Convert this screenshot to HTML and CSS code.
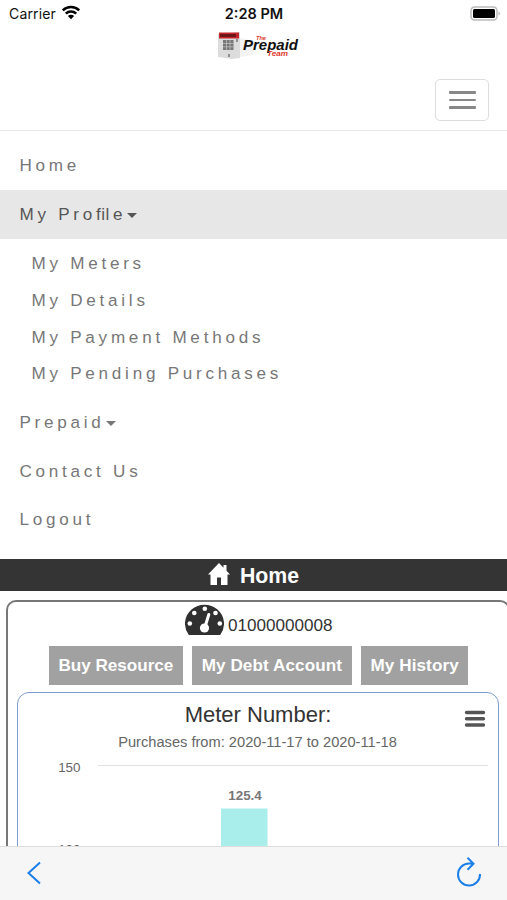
FILE: index.html
```html
<!DOCTYPE html>
<html lang="en">
<head>
  <meta charset="UTF-8" />
  <meta name="viewport" content="width=device-width, initial-scale=1.0"/>
  <title>The Prepaid Team</title>
  <link rel="stylesheet" href="styles.css">
</head>
<body>
  <div class="statusbar">
    <div class="carrier">
      <span>Carrier</span>
      <svg width="20" height="15" viewBox="0 0 20 15">
        <path d="M1.8 5.4a11.6 11.6 0 0 1 16.4 0M4.8 8.6a7.4 7.4 0 0 1 10.4 0" fill="none" stroke="#000" stroke-width="2.5"/>
        <path d="M10 14.2l-3.1-3.1a4.4 4.4 0 0 1 6.2 0z"/>
      </svg>
    </div>
    <div class="time">2:28 PM</div>
    <div class="battery">
      <svg width="32" height="16" viewBox="0 0 32 16">
        <rect x="2" y="1" width="26" height="13" rx="3.5" fill="#fff" stroke="#bbb" stroke-width="1.5"/>
        <rect x="4" y="3" width="22" height="9" rx="1.5"/>
        <path d="M29.5 5.3l2 2.2-2 2.2z" fill="#bbb"/>
      </svg>
    </div>
  </div>

  <header>
    <svg class="logo" width="84" height="32" viewBox="0 0 84 32">
      <path d="M1 3l22-2v26l-8 1-14-2z" fill="#dcdcdc"/>
      <path d="M23 7l15 3-2 14-13 2z" fill="#f3f3f3"/>
      <path d="M2 1.500h20v6h-20z" fill="#c5262b"/>
      <path d="M3 3h16v3h-16z" fill="#6d1719"/>
      <rect x="6" y="9" width="10.500" height="10" fill="#777"/>
      <path d="M9.500 9v10M13 9v10M6 12.500h10.500M6 15.800h10.500" stroke="#c4c4c4" stroke-width=".7"/>
      <path d="M20 8v3M12 23v3" stroke="#666" stroke-width="1.300"/>
      <text x="39" y="9" class="logo-red" font-size="6" textLength="10" lengthAdjust="spacingAndGlyphs">The</text>
      <text x="26" y="18.500" class="logo-black" font-size="14.500" textLength="55" lengthAdjust="spacingAndGlyphs">Prepaid</text>
      <text x="50" y="24.500" class="logo-red" font-size="7.500" textLength="21" lengthAdjust="spacingAndGlyphs">Team</text>
    </svg>
    <button class="toggle" aria-label="Menu"><i></i><i></i><i></i></button>
  </header>

  <nav>
    <a>Home</a>
    <a class="active">My Pro<span class="lig">fi</span>le<b class="caret"></b></a>
    <div class="submenu">
      <a>My Meters</a>
      <a>My Details</a>
      <a>My Payment Methods</a>
      <a>My Pending Purchases</a>
    </div>
    <a>Prepaid<b class="caret"></b></a>
    <a>Contact Us</a>
    <a>Logout</a>
  </nav>

  <div class="page-title">
    <svg width="22" height="22" viewBox="0 0 22 22">
      <path d="M11 0L0 11.500h2.500V22h6.500v-7.500h4V22h6.500V11.500h2.500L18.500 7.800V2H15.500v2.700z" fill="#fff"/>
    </svg>
    <h1>Home</h1>
  </div>

  <main>
    <section class="card">
      <div class="meter">
        <svg width="39" height="31" viewBox="0 0 39 31">
          <path d="M3.500 30.500A19.500 19 0 1 1 35.500 30.500Q35 31 34 31H5Q4 31 3.500 30.500z" fill="#303030"/>
          <g fill="#fff">
            <circle cx="4.800" cy="19.500" r="2.300"/>
            <circle cx="9.300" cy="9" r="2.300"/>
            <circle cx="19.800" cy="4.700" r="2.300"/>
            <circle cx="30.500" cy="9" r="2.300"/>
            <circle cx="34.800" cy="19.500" r="2.300"/>
            <circle cx="19.500" cy="24" r="4.600"/>
          </g>
          <path d="M20 23L23.800 10.500" stroke="#fff" stroke-width="3" stroke-linecap="round"/>
        </svg>
        <span>01000000008</span>
      </div>
      <div class="buttons">
        <button>Buy Resource</button>
        <button>My Debt Account</button>
        <button>My History</button>
      </div>
      <div class="chart">
        <svg width="480" height="240" viewBox="0 0 480 240">
          <text x="240" y="29" class="chart-title">Meter Number:</text>
          <text x="239.500" y="54" class="chart-subtitle">Purchases from: 2020-11-17 to 2020-11-18</text>
          <path d="M448.500 19.500h17M448.500 25.700h17M448.500 32h17" stroke="#555" stroke-width="3.400" stroke-linecap="round"/>
          <path d="M80 72.500h390" stroke="#e2e2e2"/>
          <text x="62.500" y="79" class="axis">150</text>
          <text x="62.500" y="161" class="axis">100</text>
          <rect x="203" y="115.500" width="46.500" height="125" fill="#aaeeec"/>
          <text x="227" y="106.500" class="value">125.4</text>
        </svg>
      </div>
    </section>
  </main>

  <footer>
    <svg width="16" height="24" viewBox="0 0 16 24">
      <path d="M14 1.500L2.500 12 14 22.500" fill="none" stroke="#1a7fe8" stroke-width="2"/>
    </svg>
    <svg width="26" height="32" viewBox="0 0 26 32">
      <path d="M17 6.500H13A11 11 0 1 0 24 17M11.500 .8l6 6-6 6" fill="none" stroke="#1a7fe8" stroke-width="2"/>
    </svg>
  </footer>
</body>
</html>
```
FILE: styles.css
```css
* {
  margin: 0;
  padding: 0;
  box-sizing: border-box;
}

body {
  height: 900px;
  display: flex;
  flex-direction: column;
  overflow: hidden;
  background: #fff;
  color: #333;
  font-family: "Liberation Sans", Arial, sans-serif;
  font-size: 17.1px;
}

svg {
  display: block;
  flex: none;
}

.statusbar {
  flex: none;
  height: 27px;
  padding: 0 6px 0 9px;
  display: grid;
  grid-template-columns: 1fr auto 1fr;
  align-items: center;
  color: #111;
  font-family: Inter, sans-serif;
  font-size: 14px;
}

.carrier {
  display: flex;
  align-items: center;
  gap: 5px;
  letter-spacing: 0.15px;
}

.carrier svg {
  margin-top: -2px;
}

.time {
  font-weight: 600;
  font-size: 14.5px;
  margin-left: -2px;
}

.battery {
  justify-self: end;
}

header {
  flex: none;
  height: 104px;
  border-bottom: 1px solid #e7e7e7;
  display: flex;
  flex-direction: column;
}

.logo {
  margin: 4px 0 0 217px;
}

.logo-red,
.logo-black {
  font-style: italic;
  font-weight: bold;
}

.logo-red {
  fill: #e0392c;
}

.logo-black {
  fill: #111;
}

.toggle {
  align-self: flex-end;
  width: 54px;
  height: 42px;
  margin: 16px 18px 0 0;
  background: #fff;
  border: 1px solid #ddd;
  border-radius: 5px;
  display: flex;
  flex-direction: column;
  align-items: center;
  justify-content: center;
  gap: 5px;
}

.toggle i {
  width: 27px;
  height: 2.4px;
  border-radius: 1px;
  background: #888;
}

nav {
  flex: none;
  height: 428px;
  padding-top: 10px;
  color: #777;
  letter-spacing: 3.75px;
}

nav a {
  display: flex;
  align-items: center;
  height: 48.8px;
  padding: 2px 0 0 19.4px;
  white-space: pre;
}

nav .active {
  background: #e7e7e7;
  color: #555;
}

.lig {
  letter-spacing: 0.4px;
}

.caret {
  border-top: 5px solid;
  border-left: 5px solid transparent;
  border-right: 5px solid transparent;
  margin: 1px 0 0 1px;
}

.submenu {
  padding: 6.5px 0 6px;
}

.submenu a {
  height: 36.6px;
  padding-left: 31.4px;
}

.page-title {
  flex: none;
  height: 32px;
  background: #343434;
  color: #fff;
  display: flex;
  align-items: center;
  justify-content: center;
  gap: 10px;
}

.page-title svg {
  margin-top: -2px;
}

.page-title h1 {
  font-size: 21.3px;
  line-height: 24px;
  padding-top: 2px;
}

main {
  flex: 1;
  min-height: 0;
  overflow: hidden;
  padding: 9px 0 0 6px;
}

.card {
  width: 504px;
  height: 400px;
  padding: 2px 0 0 9px;
  border: 2px solid #777;
  border-radius: 10px;
}

.meter {
  display: flex;
  padding-left: 168px;
  gap: 4px;
}

.meter span {
  padding-top: 12px;
  line-height: 20px;
}

.buttons {
  display: flex;
  gap: 9.5px;
  margin: 10px 0 7px 32px;
}

.buttons button {
  height: 39px;
  padding: 1px 9.4px 0;
  border: 0;
  background: #a1a1a1;
  color: #fff;
  font: bold 17.1px "Liberation Sans", Arial, sans-serif;
  white-space: nowrap;
}

.buttons button:nth-child(2) {
  letter-spacing: 0.1px;
}

.buttons button:nth-child(3) {
  letter-spacing: 0.1px;
}

.chart {
  width: 482px;
  height: 300px;
  border: 1.5px solid #7f9bd0;
  border-radius: 12px;
}

.chart svg {
  margin-top: -0.5px;
}

.chart-title {
  font-size: 22px;
  fill: #333;
  text-anchor: middle;
}

.chart-subtitle {
  font-size: 14.65px;
  fill: #666;
  text-anchor: middle;
}

.axis {
  font-size: 13.4px;
  fill: #666;
  text-anchor: end;
}

.value {
  font-size: 13.4px;
  font-weight: bold;
  fill: #777;
  text-anchor: middle;
}

footer {
  flex: none;
  height: 54px;
  padding: 0 25px 2px 26px;
  background: #f7f6f7;
  border-top: 1px solid #dedede;
  display: flex;
  align-items: center;
  justify-content: space-between;
}
```
